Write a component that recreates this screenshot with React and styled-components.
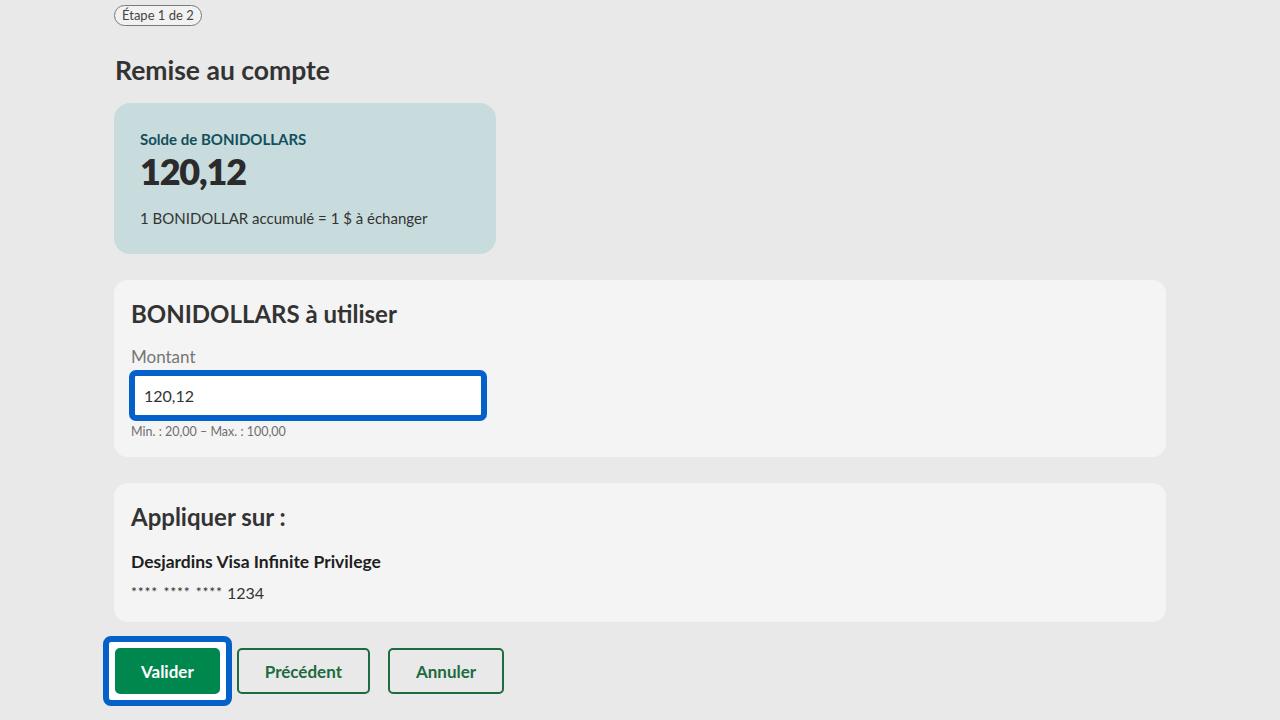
import React from "react";
import styled, { createGlobalStyle } from "styled-components";

const GlobalStyle = createGlobalStyle`
	* {
		box-sizing: border-box;
	}
	body {
		margin: 0;
		background: #e9e9e9;
		font-family: "Lato", "Open Sans", sans-serif;
		color: #333;
	}
`;

function App() {
	return (
		<>
			<GlobalStyle />
			<Page>
				<StepPill>Étape 1 de 2</StepPill>
				<PageTitle>Remise au compte</PageTitle>

				<BalanceCard>
					<BalanceLabel>Solde de BONIDOLLARS</BalanceLabel>
					<BalanceValue>120,12</BalanceValue>
					<BalanceNote>1 BONIDOLLAR accumulé = 1 $ à échanger</BalanceNote>
				</BalanceCard>

				<Panel>
					<PanelTitle>BONIDOLLARS à utiliser</PanelTitle>
					<FieldLabel htmlFor="montant">Montant</FieldLabel>
					<InputFocus>
						<Input id="montant" defaultValue="120,12" />
					</InputFocus>
					<Helper>Min. : 20,00 – Max. : 100,00</Helper>
				</Panel>

				<Panel $bottom={19}>
					<PanelTitle>Appliquer sur :</PanelTitle>
					<CardName>Desjardins Visa Infinite Privilege</CardName>
					<CardNumber>
						<Stars>**** **** ****</Stars> 1234
					</CardNumber>
				</Panel>

				<Actions>
					<FocusRing>
						<Button $primary>Valider</Button>
					</FocusRing>
					<Button>Précédent</Button>
					<Button>Annuler</Button>
				</Actions>
			</Page>
		</>
	);
}

export default App;

const Page = styled.div`
	width: 1052px;
	margin-left: 114px;
	padding-top: 5px;
	display: flex;
	flex-direction: column;
	align-items: flex-start;
`;

const StepPill = styled.div`
	height: 21px;
	padding: 0 7px;
	border: 1px solid #7a7a7a;
	border-radius: 11px;
	font-size: 13px;
	line-height: 19px;
	color: #444;
	background: #f2f2f2;
`;

const PageTitle = styled.h1`
	margin: 29px 0 0 1px;
	font-size: 26.5px;
	font-weight: 700;
	line-height: 30px;
	color: #333;
`;

const BalanceCard = styled.div`
	margin-top: 18px;
	width: 382px;
	height: 151px;
	padding: 27px 26px 0;
	background: #c8dcdd;
	border-radius: 16px;
`;

const BalanceLabel = styled.div`
	font-size: 15px;
	font-weight: 700;
	line-height: 18px;
	color: #11505c;
`;

const BalanceValue = styled.div`
	margin-top: 1px;
	font-size: 36px;
	font-weight: 800;
	line-height: 44px;
	letter-spacing: -1.2px;
	color: #2b2b2b;
`;

const BalanceNote = styled.div`
	margin-top: 16px;
	font-size: 15px;
	line-height: 18px;
	color: #333;
`;

const Panel = styled.section`
	margin-top: 26px;
	width: 100%;
	padding: 20px 17px ${(props) => props.$bottom || 17}px;
	background: #f4f4f4;
	border-radius: 14px;
	display: flex;
	flex-direction: column;
	align-items: flex-start;
`;

const PanelTitle = styled.h2`
	margin: 0;
	font-size: 24px;
	font-weight: 700;
	line-height: 28px;
	color: #333;
`;

const FieldLabel = styled.label`
	margin-top: 19px;
	font-size: 17px;
	line-height: 20px;
	color: #767676;
`;

const InputFocus = styled.div`
	margin: 3px 0 0 -2px;
	width: 358px;
	height: 51px;
	border: 6px solid #0461c9;
	border-radius: 7px;
	background: #fff;
`;

const Input = styled.input`
	width: 100%;
	height: 100%;
	border: none;
	outline: none;
	padding: 0 9px;
	font-family: inherit;
	font-size: 16px;
	color: #333;
	background: transparent;
`;

const Helper = styled.div`
	margin-top: 3px;
	font-size: 12.5px;
	line-height: 16px;
	color: #6f6f6f;
`;

const CardName = styled.div`
	margin-top: 21px;
	font-size: 17.5px;
	font-weight: 700;
	line-height: 20px;
	color: #1e1e1e;
`;

const CardNumber = styled.div`
	margin-top: 10px;
	font-size: 16px;
	line-height: 20px;
	color: #333;
`;

const Stars = styled.span`
	font-size: 14px;
	letter-spacing: 0.8px;
	word-spacing: 1px;
	vertical-align: 2px;
`;

const Actions = styled.div`
	margin: 14px 0 0 -11px;
	display: flex;
	align-items: center;
	gap: 18px;
`;

const FocusRing = styled.div`
	padding: 6px;
	border: 6px solid #0461c9;
	border-radius: 8px;
	background: #fff;
	margin-right: -13px;
`;

const Button = styled.button`
	height: 46px;
	padding: 0 ${(props) => (props.$primary ? 24 : 26)}px;
	border-radius: 5px;
	border: 2px solid ${(props) => (props.$primary ? "#00874e" : "#1d6b3f")};
	background: ${(props) => (props.$primary ? "#00874e" : "transparent")};
	color: ${(props) => (props.$primary ? "#fff" : "#1d6b3f")};
	font-family: inherit;
	font-size: 17px;
	font-weight: 700;
	cursor: pointer;
`;
